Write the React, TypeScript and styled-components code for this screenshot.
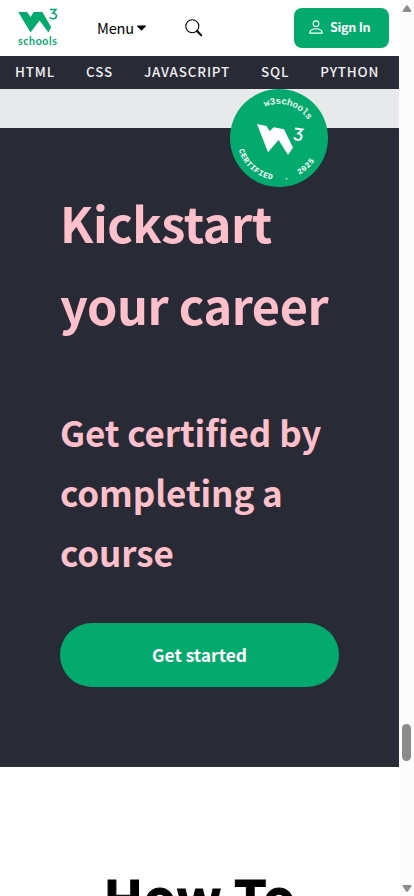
import React from "react";
import styled, { createGlobalStyle } from "styled-components";

const GlobalStyle = createGlobalStyle`
  * { box-sizing: border-box; }
  html, body { margin: 0; padding: 0; overflow: hidden; background: #fff; }
  body { font-family: "Noto Sans CJK SC", "Noto Sans", sans-serif; color: #000; }
`;

const Screen = styled.div`
  display: flex;
  width: 414px;
  height: 896px;
  overflow: hidden;
`;

const Page = styled.main`
  width: 399px;
  height: 896px;
  overflow: hidden;
`;

const TopBar = styled.header`
  display: flex;
  align-items: flex-start;
  height: 56px;
  padding: 8px 10px 0 16px;
`;

const Logo = styled.svg`
  display: block;
  width: 44px;
  height: 40px;
  flex: none;
`;

const MenuButton = styled.button`
  display: flex;
  align-items: center;
  gap: 3px;
  width: 50px;
  margin: 5px 0 0 37px;
  padding: 0;
  height: 30px;
  border: 0;
  background: none;
  font: 400 14.6px/30px "Noto Sans CJK SC", sans-serif;
  letter-spacing: -0.2px;
  color: #000;
`;

const SearchIcon = styled.svg`
  display: block;
  margin: 11px 0 0 38px;
  width: 18px;
  height: 18px;
`;

const SignIn = styled.button`
  display: flex;
  align-items: center;
  gap: 5px;
  width: 95px;
  height: 40px;
  margin-left: auto;
  padding: 0 0 2px 13px;
  border: 0;
  border-radius: 8px;
  background: #04aa6d;
  color: #fff;
  font: 700 12.6px/20px "Noto Sans CJK SC", sans-serif;
  letter-spacing: -0.3px;
  white-space: nowrap;
`;

const SubjectNav = styled.nav`
  display: flex;
  gap: 31px;
  height: 33px;
  padding-left: 15px;
  background: #282a35;
`;

const Subject = styled.a`
  font-size: 13.4px;
  line-height: 31px;
  letter-spacing: 0.84px;
  font-weight: 500;
  color: #f1f1f1;
`;

const Strip = styled.div`
  height: 39px;
  background: #e7e9eb;
`;

const Hero = styled.section`
  position: relative;
  height: 639px;
  padding: 53px 60px 0;
  background: #282a35;
  color: #ffc0cb;
`;

const Badge = styled.svg`
  position: absolute;
  left: 230px;
  top: -39px;
  width: 98px;
  height: 98px;
`;

const Title = styled.h1`
  margin: 0;
  font-size: 48.6px;
  line-height: 82px;
  letter-spacing: -0.45px;
  font-weight: 700;
  white-space: nowrap;
`;

const Subtitle = styled.h2`
  margin: 57px 0 0;
  font-size: 35px;
  line-height: 60px;
  letter-spacing: -0.1px;
  font-weight: 700;
  white-space: nowrap;
`;

const StartButton = styled.button`
  display: block;
  width: 279px;
  height: 64px;
  margin-top: 41px;
  padding: 0;
  border: 0;
  border-radius: 32px;
  background: #04aa6d;
  color: #fff;
  font: 700 17.4px/64px "Noto Sans CJK SC", sans-serif;
`;

const HowTo = styled.h2`
  margin: 89px 0 0;
  text-align: center;
  font-size: 53px;
  line-height: 80px;
  font-weight: 700;
  -webkit-text-stroke: 1px #000;
`;

const Scrollbar = styled.aside`
  display: flex;
  flex-direction: column;
  align-items: center;
  width: 15px;
  height: 896px;
  padding: 5px 0 4px;
  background: #fcfcfc;
`;

const Arrow = styled.svg`
  display: block;
  width: 10px;
  height: 8px;
`;

const Thumb = styled.div`
  width: 9px;
  height: 37px;
  margin: 711px 0 auto;
  border-radius: 5px;
  background: #8b8b8b;
`;

const subjects = ["HTML", "CSS", "JAVASCRIPT", "SQL", "PYTHON"];

function Brand() {
  return (
    <Logo viewBox="16 8 44 40" fill="#04aa6d">
      <path d="M18.3 12H27L30.6 17L33.6 12H42.4L51.2 27.3L48.4 32.4L39.6 20.5L30.5 32.6Z" />
      <path d="M50 9.5H56L52.8 13.2C55 13.2 56.4 14.3 56.4 16C56.4 17.7 55 18.8 53.1 18.8C51.5 18.8 50.4 18.2 49.8 17.1" fill="none" stroke="#04aa6d" strokeWidth="1.5" />
      <text x="18" y="44.6" fontFamily="Lato, sans-serif" fontWeight="700" fontSize="10.6" textLength="39">schools</text>
    </Logo>
  );
}

function CertifiedBadge() {
  return (
    <Badge viewBox="0 0 98 98">
      <defs>
        <path id="upper-arc" d="M15 49A34 34 0 0 1 83 49" />
        <path id="lower-arc" d="M7 49A42 42 0 0 0 91 49" />
      </defs>
      <circle cx="49" cy="49" r="49" fill="#04aa6d" />
      <g fill="#fff" fontFamily="Liberation Mono, monospace" fontWeight="700">
        <text fontSize="9.5" opacity=".9">
          <textPath href="#upper-arc" startOffset="39" textLength="49">w3schools</textPath>
        </text>
        <text fontSize="8">
          <textPath href="#lower-arc" startOffset="12" textLength="47">CERTIFIED</textPath>
        </text>
        <text fontSize="8">
          <textPath href="#lower-arc" startOffset="71">.</textPath>
        </text>
        <text fontSize="8">
          <textPath href="#lower-arc" startOffset="87" textLength="21">2025</textPath>
        </text>
        <path d="M27 35L36.5 37L39.5 42L43.8 38.3L54 40.3L63 58.5L58 66L48.6 51L38 63.3Z" />
      </g>
      <path d="M65 39.4L72.5 40.4L68.5 44.4C71 44.9 72 46.4 71.5 48.4C71 50.4 69 51.2 67 50.7C65.6 50.4 64.5 49.4 64.2 48.2" fill="none" stroke="#fff" strokeWidth="2" />
    </Badge>
  );
}

export default function App() {
  return (
    <Screen>
      <GlobalStyle />
      <Page>
        <TopBar>
          <Brand />
          <MenuButton>
            Menu
            <svg width="9" height="6" viewBox="0 0 9 6"><path d="M.5 .5H8.5Q9.2 .7 8.7 1.4L5 5.3Q4.5 5.8 4 5.3L.3 1.4Q-.2 .7 .5 .5Z" /></svg>
          </MenuButton>
          <SearchIcon viewBox="0 0 18 18" fill="none" stroke="#000">
            <circle cx="7.3" cy="7.3" r="6.5" strokeWidth="1.1" />
            <path d="M12 12L16.2 16.2" strokeWidth="2.1" strokeLinecap="round" />
          </SearchIcon>
          <SignIn>
            <svg width="18" height="18" viewBox="0 0 16 16" fill="#fff">
              <path d="M8 8a3 3 0 1 0 0-6 3 3 0 0 0 0 6m2-3a2 2 0 1 1-4 0 2 2 0 0 1 4 0m4 8c0 1-1 1-1 1H3s-1 0-1-1 1-4 6-4 6 3 6 4m-1-.004c-.001-.246-.154-.986-.832-1.664C11.516 10.68 10.289 10 8 10s-3.516.68-4.168 1.332c-.678.678-.83 1.418-.832 1.664z" />
            </svg>
            Sign In
          </SignIn>
        </TopBar>
        <SubjectNav>
          {subjects.map((name) => <Subject key={name}>{name}</Subject>)}
        </SubjectNav>
        <Strip />
        <Hero>
          <CertifiedBadge />
          <Title>Kickstart<br />your career</Title>
          <Subtitle>Get certified by<br />completing a<br />course</Subtitle>
          <StartButton>Get started</StartButton>
        </Hero>
        <HowTo>How To</HowTo>
      </Page>
      <Scrollbar>
        <Arrow viewBox="0 0 10 8" fill="#8b8b8b"><path d="M4 .8Q5 -.4 6 .8L9.2 5.5Q9.8 7 8.5 7H1.5Q.2 7 .8 5.5Z" /></Arrow>
        <Thumb />
        <Arrow viewBox="0 0 10 8" fill="#8b8b8b"><path d="M4 7.2Q5 8.4 6 7.2L9.2 2.5Q9.8 1 8.5 1H1.5Q.2 1 .8 2.5Z" /></Arrow>
      </Scrollbar>
    </Screen>
  );
}
